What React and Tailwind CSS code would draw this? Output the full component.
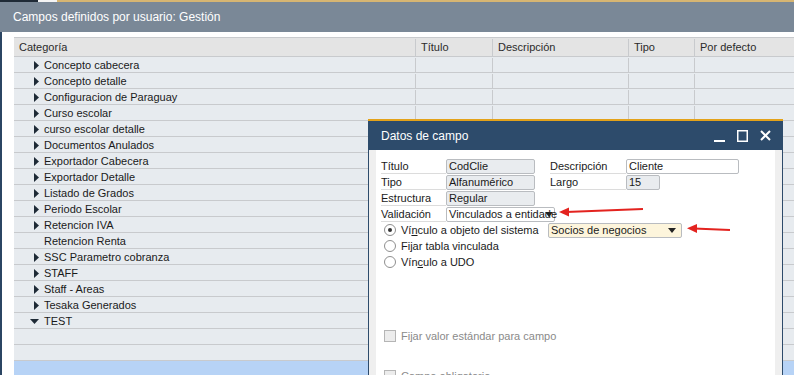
const rows = [
  { name: 'Concepto cabecera', icon: 'right' },
  { name: 'Concepto detalle', icon: 'right' },
  { name: 'Configuracion de Paraguay', icon: 'right' },
  { name: 'Curso escolar', icon: 'right' },
  { name: 'curso escolar detalle', icon: 'right' },
  { name: 'Documentos Anulados', icon: 'right' },
  { name: 'Exportador Cabecera', icon: 'right' },
  { name: 'Exportador Detalle', icon: 'right' },
  { name: 'Listado de Grados', icon: 'right' },
  { name: 'Periodo Escolar', icon: 'right' },
  { name: 'Retencion IVA', icon: 'right' },
  { name: 'Retencion Renta', icon: null },
  { name: 'SSC Parametro cobranza', icon: 'right' },
  { name: 'STAFF', icon: 'right' },
  { name: 'Staff - Areas', icon: 'right' },
  { name: 'Tesaka Generados', icon: 'right' },
  { name: 'TEST', icon: 'down' },
  { name: '', icon: null },
  { name: '', icon: null },
];

const Arrow = ({ dir }) => {
  if (dir === 'right') {
    return (
      <svg width="5" height="9" viewBox="0 0 5 9" className="shrink-0">
        <path d="M0 0 L5 4.5 L0 9 Z" fill="#1e2a36" />
      </svg>
    );
  }
  if (dir === 'down') {
    return (
      <svg width="9" height="5" viewBox="0 0 9 5" className="shrink-0">
        <path d="M0 0 L9 0 L4.5 5 Z" fill="#1e2a36" />
      </svg>
    );
  }
  return <span className="w-[5px] shrink-0" />;
};

const Cell = ({ w, children, className = '' }) => (
  <div className={`h-full border-r border-[#c8cacd] shrink-0 flex items-center ${w} ${className}`}>{children}</div>
);

const Label = ({ w, children }) => (
  <div className={`h-[15px] border-b border-[#dcdcdc] flex items-center shrink-0 ${w}`}>{children}</div>
);

const Field = ({ w, bg = 'bg-[#e9ecef]', children }) => (
  <div className={`h-[15px] border border-[#b9bcc0] rounded-[2px] px-[2px] flex items-center shrink-0 relative ${w} ${bg}`}>
    {children}
  </div>
);

const Caret = ({ className = '' }) => (
  <svg width="8" height="5" viewBox="0 0 8 5" className={`shrink-0 ${className}`}>
    <path d="M0 0 L8 0 L4 5 Z" fill="#222" />
  </svg>
);

const Radio = ({ checked, children }) => (
  <div className="flex items-center h-[16px]">
    <span className="w-[12px] h-[12px] rounded-full border border-[#8f8f8f] bg-white flex items-center justify-center ml-[3px] mr-[5px]">
      {checked && <span className="w-[4px] h-[4px] rounded-full bg-[#333]" />}
    </span>
    <span>{children}</span>
  </div>
);

export default function App() {
  return (
    <div className="w-[794px] h-[375px] overflow-hidden relative bg-white font-['Liberation_Sans',Arial,sans-serif] text-[11px] text-[#1a1a1a]">
      {/* top strip */}
      <div className="h-[2px] flex">
        <div className="w-[38px] bg-[#1f2a36]" />
        <div className="w-[19px] bg-[#f4f4f4]" />
        <div className="flex-1 bg-[#d6b572]" />
      </div>
      {/* title bar */}
      <div className="h-[30px] bg-[#7a8897] flex items-center pl-[13px]">
        <span className="text-[12px] text-white">Campos definidos por usuario: Gestión</span>
      </div>
      {/* body */}
      <div className="flex h-[343px]">
        <div className="w-[2px] bg-[#2b4563]" />
        <div className="w-[12px]" />
        <div className="flex-1 flex flex-col pt-[5px] min-w-0">
          {/* header */}
          <div className="h-[20px] bg-[#e4e4e4] border-t border-b border-[#c8cacd] flex text-[#2b2b2b] pt-[1px]">
            <Cell w="w-[402px]" className="pl-[5px]">Categoría</Cell>
            <Cell w="w-[77px]" className="pl-[5px]">Título</Cell>
            <Cell w="w-[136px]" className="pl-[5px]">Descripción</Cell>
            <Cell w="w-[66px]" className="pl-[5px]">Tipo</Cell>
            <div className="flex-1 pl-[5px] flex items-center">Por defecto</div>
          </div>
          {rows.map((r, i) => (
            <div key={i} className="h-[16px] bg-[#e7ebef] border-b border-[#c8cacd] flex pt-[1px]">
              <Cell w="w-[402px]">
                <div className={`flex items-center gap-[5px] ${r.icon === 'down' ? 'pl-[16px]' : 'pl-[20px]'}`}>
                  <Arrow dir={r.icon} />
                  <span>{r.name}</span>
                </div>
              </Cell>
              <Cell w="w-[77px]" />
              <Cell w="w-[136px]" />
              <Cell w="w-[66px]" />
              <div className="flex-1" />
            </div>
          ))}
          <div className="flex-1 bg-[#b7d3f6]" />
        </div>
      </div>

      {/* dialog */}
      <div className="absolute left-[368px] top-[119px] w-[415px] h-[300px] border-t-[2px] border-[#e3a21a] bg-[#2d4b6b] flex flex-col">
        <div className="h-[29px] flex items-center pl-[13px] pr-[12px] shrink-0">
          <span className="text-[12px] text-white">Datos de campo</span>
          <div className="ml-auto flex items-center gap-[12px]">
            <svg width="11" height="12" viewBox="0 0 11 12">
              <rect x="0" y="10" width="11" height="2" fill="#fff" />
            </svg>
            <svg width="11" height="12" viewBox="0 0 11 12">
              <rect x="0.75" y="0.75" width="9.5" height="10.5" fill="none" stroke="#fff" strokeWidth="1.5" />
            </svg>
            <svg width="11" height="11" viewBox="0 0 11 11">
              <path d="M1 1 L10 10 M10 1 L1 10" stroke="#fff" strokeWidth="2" />
            </svg>
          </div>
        </div>
        <div className="flex-1 ml-[1px] mr-[1px] bg-[#efefef] px-[7px] flex flex-col">
          <div className="flex-1 bg-white pl-[5px] pt-[9px] flex flex-col">
            <div className="flex flex-col gap-[1px]">
              <div className="flex items-center">
                <Label w="w-[65px]">Título</Label>
                <Field w="w-[89px]">CodClie</Field>
                <div className="w-[15px]" />
                <Label w="w-[76px]">Descripción</Label>
                <Field w="w-[113px]" bg="bg-white">Cliente</Field>
              </div>
              <div className="flex items-center">
                <Label w="w-[65px]">Tipo</Label>
                <Field w="w-[89px]">Alfanumérico</Field>
                <div className="w-[15px]" />
                <Label w="w-[76px]">Largo</Label>
                <Field w="w-[34px]">15</Field>
              </div>
              <div className="flex items-center">
                <Label w="w-[65px]">Estructura</Label>
                <Field w="w-[89px]">Regular</Field>
              </div>
              <div className="flex items-center">
                <Label w="w-[65px]">Validación</Label>
                <Field w="w-[109px]" bg="bg-white">
                  <span className="whitespace-nowrap">Vinculados a entidade</span>
                  <Caret className="absolute right-[1px] top-[4px]" />
                </Field>
              </div>
            </div>
            <div className="flex flex-col">
              <div className="flex items-center">
                <div className="w-[167px]">
                  <Radio checked>Ví<span className="underline">n</span>culo a objeto del sistema</Radio>
                </div>
                <Field w="w-[134px]" bg="bg-[#fdf5dc]">
                  <span className="flex-1">Socios de negocios</span>
                  <Caret className="mr-[3px]" />
                </Field>
              </div>
              <Radio>Fijar tabla vinculada</Radio>
              <Radio>Vín<span className="underline">c</span>ulo a UDO</Radio>
            </div>
            <div className="mt-[58px] flex items-center text-[#8a8a8a]">
              <span className="w-[12px] h-[12px] border border-[#b5b5b5] bg-[#ececec] ml-[3px] mr-[5px]" />
              <span>Fijar valor estándar para campo</span>
            </div>
            <div className="mt-[23px] flex items-center text-[#8a8a8a]">
              <span className="w-[12px] h-[12px] border border-[#b5b5b5] bg-[#ececec] ml-[3px] mr-[5px]" />
              <span>Campo obligatorio</span>
            </div>
          </div>
        </div>
      </div>

      {/* red arrows */}
      <svg className="absolute left-0 top-0 pointer-events-none" width="794" height="375">
        <path d="M643 209 L566 212" stroke="#e3231f" strokeWidth="2" fill="none" />
        <path d="M559 212 L569 207.5 L569 216.5 Z" fill="#e3231f" />
        <path d="M730 230 L694 228.5" stroke="#e3231f" strokeWidth="2" fill="none" />
        <path d="M687 228.3 L697 224 L697 233 Z" fill="#e3231f" />
      </svg>
    </div>
  );
}
